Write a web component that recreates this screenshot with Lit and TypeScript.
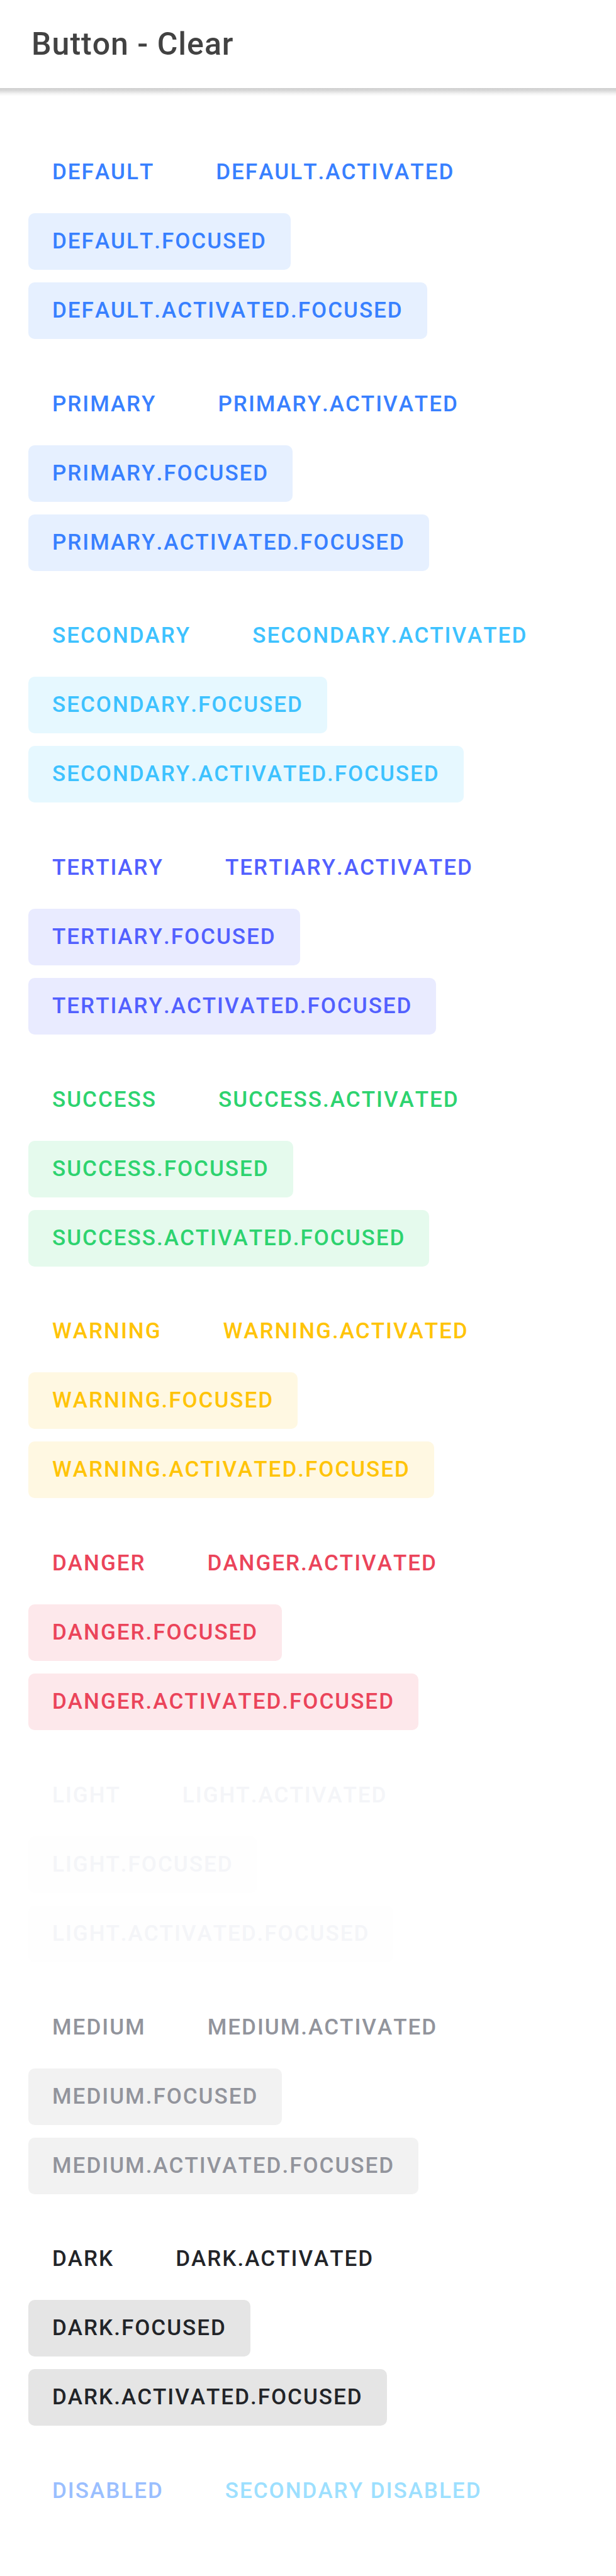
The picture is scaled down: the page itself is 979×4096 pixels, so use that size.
import { LitElement, html, css } from "lit";
import { customElement, property } from "lit/decorators.js";
import { classMap } from "lit/directives/class-map.js";

interface Swatch {
  color: string;
  label: string;
}

const SWATCHES: Swatch[] = [
  { color: "primary", label: "Default" },
  { color: "primary", label: "Primary" },
  { color: "secondary", label: "Secondary" },
  { color: "tertiary", label: "Tertiary" },
  { color: "success", label: "Success" },
  { color: "warning", label: "Warning" },
  { color: "danger", label: "Danger" },
  { color: "light", label: "Light" },
  { color: "medium", label: "Medium" },
  { color: "dark", label: "Dark" },
];

@customElement("clear-button")
class ClearButton extends LitElement {
  @property() color = "primary";
  @property({ type: Boolean }) focused = false;
  @property({ type: Boolean }) disabled = false;

  static styles = css`
    :host {
      display: block;
    }
    .button {
      display: block;
      height: 90px;
      margin: 0;
      padding: 0 38px;
      border: 0;
      border-radius: 10px;
      background: transparent;
      color: var(--base);
      font-family: Roboto, sans-serif;
      font-size: 35px;
      font-weight: 500;
      font-kerning: none;
      line-height: 40px;
      letter-spacing: 2px;
      text-transform: uppercase;
      white-space: nowrap;
      cursor: pointer;
    }
    .focused {
      background: var(--tint);
    }
    .button:disabled {
      opacity: 0.5;
      cursor: default;
    }
    .primary {
      --base: #3880ff;
      --tint: #e6f0ff;
    }
    .secondary {
      --base: #3dc2ff;
      --tint: #e6f8ff;
    }
    .tertiary {
      --base: #5260ff;
      --tint: #e9ebff;
    }
    .success {
      --base: #2dd36f;
      --tint: #e5faed;
    }
    .warning {
      --base: #ffc409;
      --tint: #fff8e2;
    }
    .danger {
      --base: #eb445a;
      --tint: #fde8eb;
    }
    .light {
      --base: #f4f5f8;
      --tint: #fefefe;
    }
    .medium {
      --base: #92949c;
      --tint: #f2f2f2;
    }
    .dark {
      --base: #222428;
      --tint: #e5e5e5;
    }
  `;

  render() {
    return html`<button
      type="button"
      class=${classMap({ button: true, [this.color]: true, focused: this.focused })}
      ?disabled=${this.disabled}
    ><slot></slot></button>`;
  }
}

@customElement("app-root")
class AppRoot extends LitElement {
  static styles = css`
    :host {
      display: flex;
      flex-direction: column;
      min-height: 100vh;
      background: #ffffff;
      font-family: Roboto, sans-serif;
    }
    .header {
      display: flex;
      align-items: center;
      height: 140px;
      padding: 0 50px;
    }
    .title {
      margin: 0;
      color: #424242;
      font-size: 50px;
      font-weight: 500;
      line-height: 60px;
      letter-spacing: 1px;
      font-kerning: none;
    }
    .shadow {
      height: 13px;
      background: linear-gradient(#cfcfcf, #d8d8d8 30%, #f4f4f4 70%, #ffffff);
    }
    .content {
      flex: 1;
      display: flex;
      flex-direction: column;
      justify-content: space-between;
      gap: 58px;
      padding: 76px 45px 90px;
    }
    .group {
      display: flex;
      flex-direction: column;
      align-items: flex-start;
      gap: 20px;
    }
    .row {
      display: flex;
      gap: 22px;
    }
  `;

  render() {
    return html`
      <header class="header"><h1 class="title">Button - Clear</h1></header>
      <div class="shadow"></div>
      <main class="content">
        ${SWATCHES.map(
          ({ color, label }) => html`
            <section class="group">
              <div class="row">
                <clear-button color=${color}>${label}</clear-button>
                <clear-button color=${color}>${label}.activated</clear-button>
              </div>
              <clear-button color=${color} focused>${label}.focused</clear-button>
              <clear-button color=${color} focused>${label}.activated.focused</clear-button>
            </section>
          `
        )}
        <section class="row">
          <clear-button disabled>Disabled</clear-button>
          <clear-button color="secondary" disabled>Secondary Disabled</clear-button>
        </section>
      </main>
    `;
  }
}
